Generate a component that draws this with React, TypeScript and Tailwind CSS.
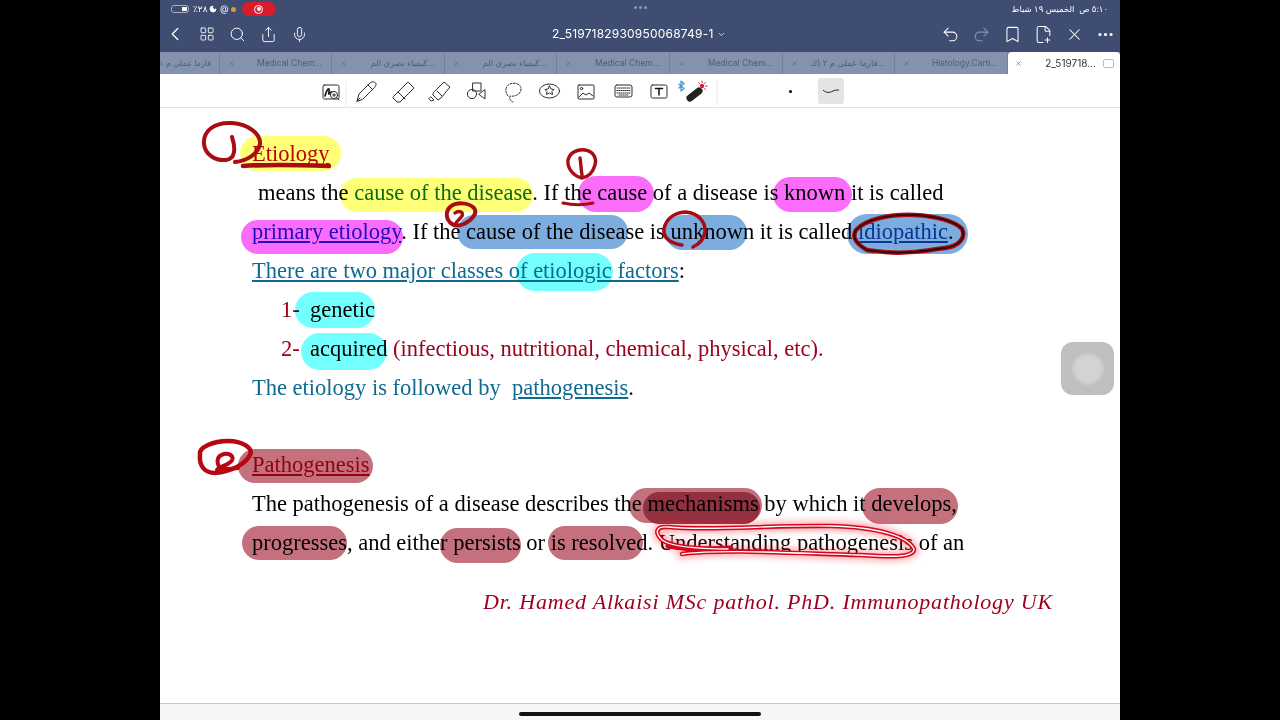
import React from 'react';
import { Bookmark, ChevronDown, ChevronLeft, Ellipsis, FilePlus2, LayoutGrid, Mic, Moon, Redo2, Search, Share, Undo2, X } from 'lucide-react';

const serif = "font-['Liberation_Serif',serif]";
const sans = "font-['Inter','DejaVu_Sans',sans-serif]";

const tabs = [
  { label: 'قارما عملي م ١', w: 'w-[60px]', noX: true },
  { label: 'Medical Chem...', w: 'w-[112px]' },
  { label: 'كيمياء نضري الم...', w: 'w-[113px]' },
  { label: 'كيمياء نضري الم...', w: 'w-[112px]' },
  { label: 'Medical Chem...', w: 'w-[113px]' },
  { label: 'Medical Chem...', w: 'w-[113px]' },
  { label: 'قارما عملي م ٢ (ك...', w: 'w-[112px]' },
  { label: 'Histology.Carti...', w: 'w-[113px]' },
];

// translucent marker strokes, drawn in screen coordinates
const marks = [
  { c: '#ffff78', x: 240, y: 136, w: 101, h: 35 },
  { c: '#ffff78', x: 340, y: 178, w: 193, h: 34 },
  { c: '#fb6cfb', x: 578, y: 176, w: 76, h: 36 },
  { c: '#fb6cfb', x: 773, y: 177, w: 79, h: 35 },
  { c: '#fb6cfb', x: 241, y: 220, w: 162, h: 34 },
  { c: '#7dacdf', x: 457, y: 215, w: 171, h: 34 },
  { c: '#7dacdf', x: 665, y: 215, w: 82, h: 35 },
  { c: '#7dacdf', x: 847, y: 214, w: 121, h: 40 },
  { c: '#74ffff', x: 516, y: 253, w: 97, h: 38 },
  { c: '#74ffff', x: 295, y: 292, w: 80, h: 36 },
  { c: '#74ffff', x: 301, y: 333, w: 86, h: 37 },
  { c: '#c4707d', x: 238, y: 449, w: 135, h: 34 },
  { c: '#c4707d', x: 629, y: 488, w: 133, h: 35 },
  { c: '#93303f', x: 643, y: 492, w: 117, h: 32 },
  { c: '#c4707d', x: 862, y: 488, w: 96, h: 36 },
  { c: '#c4707d', x: 242, y: 526, w: 105, h: 34 },
  { c: '#c4707d', x: 440, y: 528, w: 81, h: 35 },
  { c: '#c4707d', x: 548, y: 526, w: 95, h: 34 },
];

const ring = 'M867 250C858 245 851 238 856 230C866 219 890 214 915 215C935 216 955 221 962 229C966 237 960 246 945 248C925 251 905 254 885 252C877 251 871 251 867 250';
const lasso = 'M682 554C720 549 790 553 860 555C890 557 914 558 914 549C908 537 880 527 830 526C770 525 710 531 668 527C655 526 655 533 662 540C672 547 700 549 728 549';

const ink = [
  { d: 'M235 162C247 161 258 154 260 144C261 134 248 124 232 123C214 122 203 131 204 144C205 155 216 161 226 160C235 159 236 149 232 137', w: 4 },
  { d: 'M243 166C270 164 300 165 329 166', w: 4.5 },
  { d: 'M582 178C573 176 567 168 568 160C570 152 578 149 585 150C593 151 597 158 595 165C593 172 588 177 582 178M580 158C581 164 581 170 582 175', w: 3.4 },
  { d: 'M563 203C572 205 584 205 593 203', w: 3 },
  { d: 'M452 224C446 220 445 212 450 207C456 202 468 202 474 208C478 213 472 220 464 224C459 226 455 226 452 224', w: 4 },
  { d: 'M455 213C459 210 464 212 462 216C460 219 457 221 456 223', w: 3.4 },
  { d: 'M682 245C670 243 663 238 664 229C666 218 676 212 686 212C698 213 706 222 705 232C704 240 699 244 693 247', w: 3.6 },
];

const Tools = () => (
  <svg className="absolute left-0 top-0" width="960" height="34" viewBox="160 74 960 34" fill="none" stroke="#2f2f33" strokeWidth="1" strokeLinecap="round" strokeLinejoin="round">
    {/* pen-to-zoom */}
    <rect x="323" y="85" width="16" height="14" rx="1.5" />
    <path d="M325 96c1-4 3-8 4-7s-1 5 0 5 2-3 3-2" strokeWidth="1.6" stroke="#111" />
    <circle cx="334" cy="95" r="3.6" fill="#fff" />
    <path d="M337 98l2 2M332.6 95h3M334 93.6v3" />
    <path d="M346 81v33" stroke="#eee" />
    {/* pen */}
    <path d="M357 101l2-7 11-11c2-2 6-1 6 1s-1 3-2 4l-11 11zM357 101l3-3M368 85l5 5" />
    {/* eraser */}
    <path d="M394 96l14-14 6 6-14 14h-3l-4-4zM398 92l7 7" />
    {/* highlighter */}
    <path d="M431 97l3 3-3 1-2-2zM433 95l5 5 3-2 9-11-6-5-10 10zM437 91l5 5" />
    {/* shapes */}
    <rect x="473" y="83" width="8" height="8" />
    <circle cx="472" cy="94" r="4.6" />
    <path d="M485 90v9l-6-4.500z" />
    {/* lasso */}
    <path d="M508 96c-3-4-3-10 2-12s11 0 11 5-6 8-11 7c-1 2 0 5 3 6" strokeDasharray="2 1.500" />
    {/* stamp */}
    <ellipse cx="549.500" cy="91" rx="10" ry="7" />
    <path d="M549.500 86l1.500 3 3 .5-2 2 .5 3-3-1.500-3 1.500.5-3-2-2 3-.5z" />
    {/* image */}
    <rect x="578" y="85" width="16" height="14" rx="1" />
    <circle cx="581.500" cy="88.500" r="1.200" />
    <path d="M579 97l4-4 3 2 3-2 4 3" />
    {/* keyboard */}
    <rect x="615" y="85" width="17" height="12" rx="2" />
    <path d="M617 88h13M617 90.500h13M617 93h13M619 95h9" strokeDasharray="1 1" />
    {/* text box */}
    <rect x="651" y="85" width="16" height="13" rx="1.500" />
    <path d="M655.500 88.500h7M659 88.500v6.500" strokeWidth="1.500" stroke="#111" />
    {/* bluetooth + laser pen */}
    <path d="M681 81l3 2.500-3 2.500 3 2.500-3 2.500v-10zM679 84l2 2-2 2" stroke="#3b9bd6" strokeWidth="1.200" />
    <path d="M690 98l9-7" stroke="#222" strokeWidth="7" />
    <circle cx="702" cy="86" r="2.200" fill="#d21f35" stroke="none" />
    <path d="M702 81v1.500M707 86h-1.500M705.500 82.500l-1 1M705.500 89.500l-1-1M698.500 82.500l1 1" stroke="#d21f35" />
    <path d="M717 81v24" stroke="#e5e5e5" />
  </svg>
);

export default function App() {
  return (
    <div className="flex h-screen justify-center overflow-hidden bg-black">
      <div className="relative flex w-[960px] flex-col bg-white">
        {/* status bar */}
        <div className={`relative flex h-[18px] items-center justify-between bg-[#3e4d71] pl-[11px] pr-[12px] text-[9px] text-white ${sans}`}>
          <div className="flex items-center">
            <div className="flex h-[8px] w-[18px] justify-end rounded-[3px] border border-[#aab] p-px"><div className="w-[5px] bg-white" /></div>
            <span className="ml-[4px] w-[14px]">٪٢٨</span>
            <Moon size={8} fill="white" className="ml-[2px]" />
            <span className="ml-[3px]">@</span>
            <div className="ml-[2px] h-[5px] w-[5px] rounded-full bg-[#e8962e]" />
            <div className="ml-[6px] flex h-[14px] w-[34px] items-center justify-center rounded-full bg-[#d91c2b]">
              <div className="flex h-[9px] w-[9px] items-center justify-center rounded-full border border-white"><div className="h-[4px] w-[4px] rounded-full bg-white" /></div>
            </div>
          </div>
          <div className="absolute left-[474px] top-[6px] flex gap-[2px]">
            <div className="h-[3px] w-[3px] rounded-full bg-[#8e98b0]" />
            <div className="h-[3px] w-[3px] rounded-full bg-[#8e98b0]" />
            <div className="h-[3px] w-[3px] rounded-full bg-[#8e98b0]" />
          </div>
          <span dir="rtl" className="text-[8.500px]">٥:١٠ ص&nbsp; الخميس ١٩ شباط</span>
        </div>

        {/* title bar */}
        <div className="relative flex h-[34px] items-center justify-between bg-[#3e4d71] pb-[2px] pl-[4px] pr-[5px] text-white">
          <div className="flex items-center gap-[12px]">
            <ChevronLeft size={22} strokeWidth={1.4} />
            <LayoutGrid size={16} strokeWidth={1.3} className="ml-[1px]" />
            <Search size={17} strokeWidth={1.4} className="ml-[2px]" />
            <Share size={17} strokeWidth={1.3} className="ml-[2px]" />
            <Mic size={17} strokeWidth={1.3} className="ml-[2px]" />
          </div>
          <div className={`absolute left-[392px] top-[7px] flex items-center gap-[3px] text-[12px] tracking-[0.2px] ${sans}`}>
            2_5197182930950068749-1
            <ChevronDown size={9} />
          </div>
          <div className="flex items-center gap-[12px]">
            <Undo2 size={19} strokeWidth={1.3} />
            <Redo2 size={19} strokeWidth={1.3} className="text-[#8794b3]" />
            <Bookmark size={19} strokeWidth={1.3} />
            <FilePlus2 size={19} strokeWidth={1.3} />
            <X size={19} strokeWidth={1.3} />
            <Ellipsis size={19} strokeWidth={2} />
          </div>
        </div>

        {/* tabs */}
        <div className={`flex h-[22px] bg-[#8492ae] text-[8.500px] text-[#515d79] ${sans}`}>
          {tabs.map((t, i) => (
            <div key={i} className={`flex shrink-0 items-center overflow-hidden border-r border-[#737f9c] ${t.w} ${t.noX ? 'justify-end pr-[8px] text-[8px]' : 'justify-between pl-[8px] pr-[9px]'}`}>
              {!t.noX && <X size={7} strokeWidth={1.5} className="shrink-0 text-[#49556f]" />}
              <span className="whitespace-nowrap">{t.label}</span>
            </div>
          ))}
          <div className="flex flex-1 items-center justify-between rounded-t-[4px] bg-white pl-[7px] pr-[6px] text-[10px] text-[#333]">
            <X size={7} strokeWidth={1.5} />
            <span className="ml-[16px] whitespace-nowrap">2_519718...</span>
            <div className="h-[9px] w-[11px] rounded-[2px] border border-[#bbb]" />
          </div>
        </div>

        {/* tools */}
        <div className="relative h-[34px] shrink-0 border-b border-[#e4e4e6] bg-white">
          <Tools />
          <div className="absolute left-[629px] top-[16px] h-[3px] w-[3px] rounded-full bg-black" />
          <div className="absolute left-[658px] top-[4px] flex h-[26px] w-[26px] items-center justify-center rounded-[3px] bg-[#e4e3e5]">
            <svg width="18" height="8" viewBox="0 0 18 8" fill="none"><path d="M1 3c3 3 7 3 10 1 2-1 4-1 6-1" stroke="#222" strokeWidth="1" /></svg>
          </div>
        </div>

        {/* document */}
        <div className={`relative flex-1 pl-[92px] pt-[26px] text-[22.500px] leading-[39px] text-black ${serif}`}>
          <div className="h-[39px] text-[#c00000] underline">Etiology</div>
          <div className="h-[39px] whitespace-nowrap pl-[6px]">
            means the <span className="text-[#0c6b1c]">cause of the disease</span>. If the cause of a disease is known it is called
          </div>
          <div className="h-[39px] whitespace-nowrap">
            <span className="text-[#1f12c0] underline">primary etiology</span>. If the cause of the disease is unknown it is called <span className="text-[#0f4fa8] underline">idiopathic</span>.
          </div>
          <div className="h-[39px] whitespace-nowrap text-[#0f6a90]"><span className="underline">There are two major classes of etiologic factors</span><span className="text-black">:</span></div>
          <div className="h-[39px] whitespace-nowrap pl-[29px]"><span className="text-[#a00020]">1-</span>&nbsp; <span className="-ml-[1px]">genetic</span></div>
          <div className="h-[39px] whitespace-nowrap pl-[29px] text-[#a00020]">2-&nbsp; <span className="-ml-[1px] text-black">acquired</span> (infectious, nutritional, chemical, physical, etc).</div>
          <div className="h-[39px] whitespace-nowrap text-[#0f6a90]">The etiology is followed by&nbsp; <span className="underline">pathogenesis</span><span className="text-black">.</span></div>
          <div className="mt-[38px] h-[39px] text-[#c00020] underline">Pathogenesis</div>
          <div className="h-[39px] whitespace-nowrap">The pathogenesis of a disease describes the mechanisms by which it develops,</div>
          <div className="h-[39px] whitespace-nowrap">progresses, and either persists or is resolved. Understanding pathogenesis of an</div>
          <div className="mt-[20px] h-[39px] whitespace-nowrap pl-[231px] text-[22px] italic tracking-[0.8px] text-[#a00020]">Dr. Hamed Alkaisi MSc pathol. PhD. Immunopathology UK</div>

          {/* annotations */}
          <svg className="absolute inset-0 mix-blend-multiply" width="960" height="595" viewBox="160 108 960 595">
            {marks.map((m, i) => <rect key={i} x={m.x} y={m.y} width={m.w} height={m.h} rx={m.h / 2} fill={m.c} />)}
          </svg>
          <svg className="absolute inset-0" width="960" height="595" viewBox="160 108 960 595" fill="none" strokeLinecap="round" strokeLinejoin="round">
            {ink.map((p, i) => <path key={i} d={p.d} stroke="#a80d14" strokeWidth={p.w} />)}
            <path d={ring} stroke="#a80d14" strokeWidth="4.500" />
            <path d={ring} stroke="#30060a" strokeWidth="1.800" />
            <path d="M200 455C198 447 214 441 228 441C242 441 254 448 250 455C246 463 232 472 215 473C204 473 199 465 200 455" stroke="#b80712" strokeWidth="4.500" />
            <path d="M221 470C216 463 216 456 224 454C232 453 236 459 229 463C226 466 218 467 217 470C225 469 232 469 238 468" stroke="#b80712" strokeWidth="4" />
            <path d={lasso} stroke="#ff2030" strokeWidth="10" opacity="0.350" className="blur-[3px]" />
            <path d={lasso} stroke="#d5061c" strokeWidth="4.500" />
            <path d="M668 546C690 550 710 549 730 548" stroke="#d5061c" strokeWidth="5" />
            <path d={lasso} stroke="#fff" strokeWidth="1.400" />
          </svg>

          {/* assistive touch */}
          <div className="absolute left-[901px] top-[234px] flex h-[53px] w-[53px] items-center justify-center rounded-[12px] bg-[#bfbfc1]">
            <div className="h-[26px] w-[26px] rounded-full bg-[#d3d2d5] ring-[3px] ring-[#cbcacc]" />
          </div>
        </div>

        {/* home indicator */}
        <div className="flex h-[17px] shrink-0 justify-center border-t border-[#c9c9c9] bg-[#f6f6f8] pt-[8px]">
          <div className="h-[4px] w-[242px] rounded-full bg-[#111]" />
        </div>
      </div>
    </div>
  );
}
